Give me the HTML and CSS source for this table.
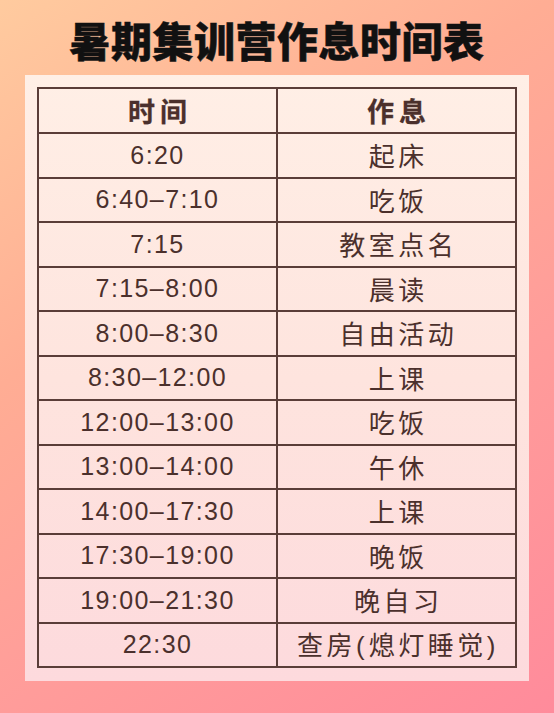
FILE: index.html
```html
<!DOCTYPE html>
<html lang="zh-CN">
<head>
<meta charset="utf-8">
<title>暑期集训营作息时间表</title>
<link rel="stylesheet" href="styles.css">
</head>
<body>
<div class="page">
  <h1 class="title">暑期集训营作息时间表</h1>
  <div class="card">
    <table class="schedule">
      <thead>
        <tr><th class="col-time">时间</th><th class="col-act">作息</th></tr>
      </thead>
      <tbody>
        <tr><td class="t">6:20</td><td class="a">起床</td></tr>
        <tr><td class="t">6:40–7:10</td><td class="a">吃饭</td></tr>
        <tr><td class="t">7:15</td><td class="a">教室点名</td></tr>
        <tr><td class="t">7:15–8:00</td><td class="a">晨读</td></tr>
        <tr><td class="t">8:00–8:30</td><td class="a">自由活动</td></tr>
        <tr><td class="t">8:30–12:00</td><td class="a">上课</td></tr>
        <tr><td class="t">12:00–13:00</td><td class="a">吃饭</td></tr>
        <tr><td class="t">13:00–14:00</td><td class="a">午休</td></tr>
        <tr><td class="t">14:00–17:30</td><td class="a">上课</td></tr>
        <tr><td class="t">17:30–19:00</td><td class="a">晚饭</td></tr>
        <tr><td class="t">19:00–21:30</td><td class="a">晚自习</td></tr>
        <tr><td class="t">22:30</td><td class="a">查房<span class="p">(</span>熄灯睡觉<span class="p">)</span></td></tr>
      </tbody>
    </table>
  </div>
</div>
</body>
</html>
```

FILE: styles.css
```css
html, body {
  margin: 0;
  padding: 0;
}
body {
  width: 554px;
  height: 713px;
  overflow: hidden;
  background: linear-gradient(145deg, #ffcb9f 0%, #ffad94 35%, #ff9c9a 65%, #ff8b9b 100%);
  font-family: "Liberation Sans", "Noto Sans CJK SC", sans-serif;
  color: #4b302c;
}
.page {
  padding-top: 15px;
}
.title {
  margin: 0;
  font-family: "Noto Sans CJK SC", sans-serif;
  font-weight: 900;
  font-size: 41px;
  line-height: 48px;
  text-align: center;
  color: #111;
  letter-spacing: 0.5px;
  -webkit-text-stroke: 0.5px #111;
}
.card {
  margin: 12px 0 0 25px;
  width: 480px;
  padding: 12px 12px 13px;
  background: linear-gradient(180deg, #ffefe6 0%, #fee4de 50%, #fddadd 100%);
}
.schedule {
  width: 480px;
  border-collapse: collapse;
  table-layout: fixed;
}
.schedule th,
.schedule td {
  border: 2px solid #5a3d38;
  text-align: center;
  padding: 0;
  height: 42.5px;
  line-height: 1;
}
.schedule th {
  font-family: "Noto Sans CJK SC", sans-serif;
  font-weight: 700;
  font-size: 27px;
  letter-spacing: 5px;
  text-indent: 5px;
  height: 43px;
  -webkit-text-stroke: 0.3px #4b302c;
}
.schedule td.t {
  font-family: "Liberation Sans", sans-serif;
  font-size: 25px;
  letter-spacing: 1.4px;
}
.schedule td.a {
  font-family: "Noto Sans CJK SC", sans-serif;
  font-size: 26px;
  letter-spacing: 3.5px;
  text-indent: 3.5px;
}
.p {
  font-family: "Liberation Sans", sans-serif;
  letter-spacing: 4px;
}
```
